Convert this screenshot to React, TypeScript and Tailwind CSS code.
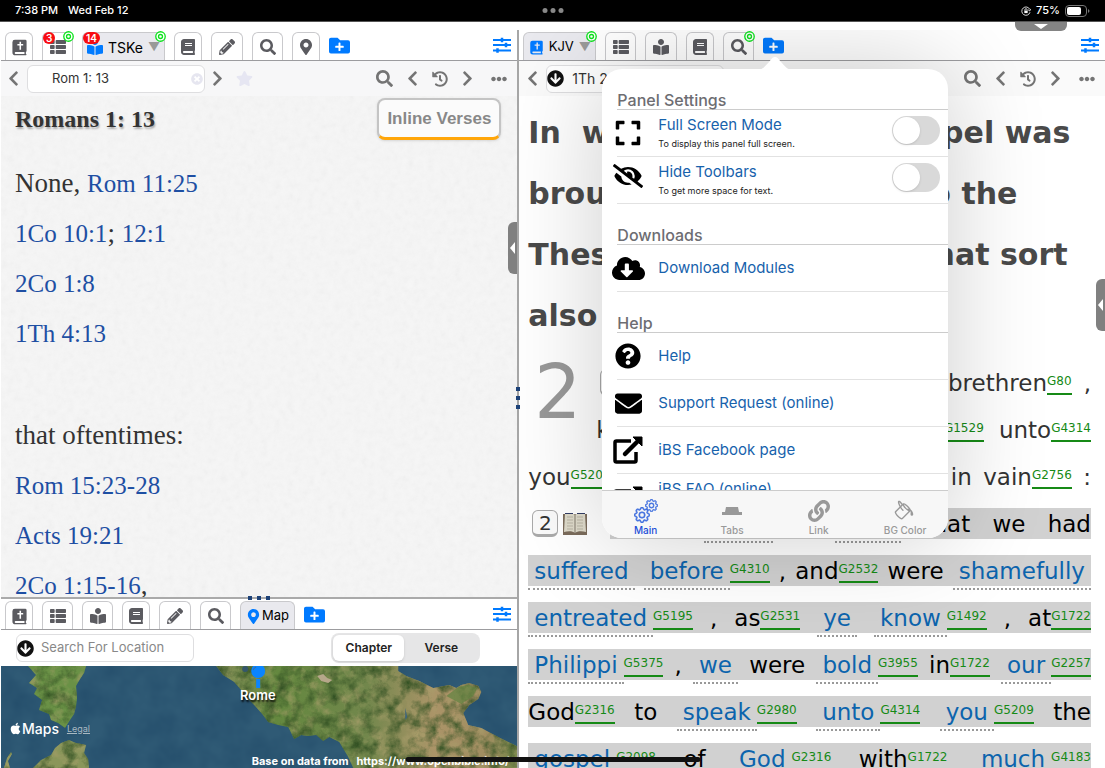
import type { ReactNode } from "react";
import clsx from "clsx";
import {
  FaApple,
  FaArrowCircleDown,
  FaBook,
  FaBookReader,
  FaChevronLeft,
  FaChevronRight,
  FaCloudDownloadAlt,
  FaEllipsisH,
  FaEnvelope,
  FaExpand,
  FaEyeSlash,
  FaFolderPlus,
  FaHistory,
  FaLink,
  FaMapMarkerAlt,
  FaPencilAlt,
  FaQuestionCircle,
  FaSearch,
  FaStar,
  FaThList,
  FaTimesCircle,
} from "react-icons/fa";
import { BsGear, BsPaintBucket } from "react-icons/bs";

type Kind = "plain" | "link" | "strong";
type Piece = [string, Kind?];
type Row = Piece[][];

const verseOneTop: Row[] = [
  [[["For"], ["G1063", "strong"]], [["yourselves"], ["G846", "strong"]], [[","]], [["brethren"], ["G80", "strong"]], [[","]]],
  [
    [["know"], ["G1492", "strong"]],
    [["our"], ["G2257", "strong"]],
    [["entrance"]],
    [["in"], ["G1529", "strong"]],
    [["unto"], ["G4314", "strong"]],
  ],
];

const verseOneEnd: Row = [
  [["you"], ["G5209", "strong"]],
  [[","]],
  [["that"], ["G3754", "strong"]],
  [["it"]],
  [["was"], ["G1096", "strong"]],
  [["not"], ["G3756", "strong"]],
  [["in"]],
  [["vain"], ["G2756", "strong"]],
  [[":"]],
];

const verseTwoStart: Row = [
  [["But"], ["G235", "strong"]],
  [["even", "link"], ["G2532", "strong"]],
  [["after", "link"]],
  [["that"]],
  [["we"]],
  [["had"]],
];

const verseTwo: Row[] = [
  [
    [["suffered", "link"]],
    [["before", "link"], ["G4310", "strong"]],
    [[","]],
    [["and"], ["G2532", "strong"]],
    [["were"]],
    [["shamefully", "link"]],
  ],
  [
    [["entreated", "link"], ["G5195", "strong"]],
    [[","]],
    [["as"], ["G2531", "strong"]],
    [["ye", "link"]],
    [["know", "link"], ["G1492", "strong"]],
    [[","]],
    [["at"], ["G1722", "strong"]],
  ],
  [
    [["Philippi", "link"], ["G5375", "strong"]],
    [[","]],
    [["we", "link"]],
    [["were"]],
    [["bold", "link"], ["G3955", "strong"]],
    [["in"], ["G1722", "strong"]],
    [["our", "link"], ["G2257", "strong"]],
  ],
  [
    [["God"], ["G2316", "strong"]],
    [["to"]],
    [["speak", "link"], ["G2980", "strong"]],
    [["unto", "link"], ["G4314", "strong"]],
    [["you", "link"], ["G5209", "strong"]],
    [["the"]],
  ],
  [
    [["gospel", "link"], ["G2098", "strong"]],
    [["of"]],
    [["God", "link"], ["G2316", "strong"]],
    [["with"], ["G1722", "strong"]],
    [["much", "link"], ["G4183", "strong"]],
  ],
];

function BookCross({ className }: { className?: string }) {
  return (
    <svg viewBox="0 0 24 24" className={className} aria-hidden="true">
      <path
        fill="currentColor"
        fillRule="evenodd"
        d="M5.500 1H20a2 2 0 0 1 2 2v14a1.500 1.500 0 0 1-1 1.400V21a1 1 0 0 1 0 2H6a4 4 0 0 1-4-4V4.500A3.500 3.500 0 0 1 5.500 1zM6.500 18.500a1.250 1.250 0 0 0 0 2.500H19v-2.500zM12 4v3H9v2h3v6h2.200V9h3V7h-3V4z"
      />
    </svg>
  );
}

function Sliders() {
  return (
    <svg viewBox="0 0 18 16" className="h-4 w-[18px] text-[#007aff]" aria-hidden="true">
      <path stroke="currentColor" strokeWidth="2" d="M0 3h18M0 8h18M0 13.500h18" />
      <path stroke="currentColor" strokeWidth="2.500" d="M9 .8v4.400M13 5.800v4.400M4.500 11.300v4.400" />
    </svg>
  );
}

function Target() {
  return (
    <svg viewBox="0 0 10 10" className="absolute -top-[2px] -right-[2px] z-10 size-[11px]" aria-hidden="true">
      <circle cx="5" cy="5" r="4.300" fill="#fff" stroke="#0be31b" strokeWidth="1.200" />
      <circle cx="5" cy="5" r="1.800" fill="none" stroke="#0be31b" strokeWidth="1.200" />
    </svg>
  );
}

function ExternalLink() {
  return (
    <svg viewBox="0 0 30 28" className="h-[28px] w-[30px] shrink-0" aria-hidden="true">
      <path d="M18 5H3.500A1.500 1.500 0 0 0 2 6.500v18A1.500 1.500 0 0 0 3.500 26h18a1.500 1.500 0 0 0 1.500-1.500V16" fill="none" stroke="currentColor" strokeWidth="3.500" />
      <path d="M12 18 25 5" stroke="currentColor" strokeWidth="4.500" strokeLinecap="round" />
      <path d="M20 1h9v9z" fill="currentColor" stroke="currentColor" strokeLinejoin="round" />
    </svg>
  );
}

function OpenBook() {
  return (
    <svg viewBox="0 0 26 24" className="h-6 w-[26px] shrink-0" aria-hidden="true">
      <path d="M1 2h24v21H1z" fill="#7b6c5c" />
      <path d="M3 2c4-1 8-1 10 1 2-2 6-2 10-1l1 18c-4-1-9-1-11 1-2-2-7-2-11-1z" fill="#dedaca" />
      <path d="M13 3v18" stroke="#827a6c" />
      <path d="M5 5h6M5 8h6M5 11h6M5 14h6M5 17h6M15 5h6M15 8h6M15 11h6M15 14h6M15 17h6" stroke="#b9b4a4" />
      <path d="M3 1.500h8M15 1.500h8" stroke="#343e66" />
    </svg>
  );
}

function Tab({
  label,
  width,
  active,
  badge,
  target,
  children,
}: {
  label: string;
  width: string;
  active?: boolean;
  badge?: string;
  target?: boolean;
  children: ReactNode;
}) {
  return (
    <button
      aria-label={label}
      className={clsx(
        "relative flex h-7 shrink-0 items-center justify-center gap-[5px] rounded-t-md border border-b-0 border-[#c9c9cc] pt-px text-[15px]",
        active ? "bg-[#e9e9ee]" : "text-[#5b5b60]",
        width,
      )}
    >
      {badge && (
        <span className="absolute -top-px left-0 z-10 h-[12px] rounded-full bg-[#f80c12] px-[3px] text-[10px] leading-3 font-semibold text-white">
          {badge}
        </span>
      )}
      {target && <Target />}
      {children}
    </button>
  );
}

function TabBar({ children }: { children: ReactNode }) {
  return (
    <div className="flex h-[31px] shrink-0 items-end gap-[9px] border-b border-[#9c9c9f] pr-[6px] pl-1">
      {children}
      <button aria-label="Add tab" className="mb-1 text-[21px] text-[#007aff]">
        <FaFolderPlus />
      </button>
      <button aria-label="Panel options" className="mb-[7px] ml-auto">
        <Sliders />
      </button>
    </div>
  );
}

function HistoryTools() {
  return (
    <div className="ml-auto flex items-center gap-[11px] text-[17px] text-[#747474]">
      <button aria-label="Search"><FaSearch /></button>
      <button aria-label="Back"><FaChevronLeft /></button>
      <button aria-label="History"><FaHistory className="text-[16px]" /></button>
      <button aria-label="Forward"><FaChevronRight /></button>
      <button aria-label="More" className="ml-1"><FaEllipsisH className="text-[16px]" /></button>
    </div>
  );
}

function VerseRow({ row, shaded, lead }: { row: Row; shaded?: boolean; lead?: ReactNode }) {
  return (
    <div className="mb-4 flex h-[31px] gap-4 text-[23px] leading-[33px]">
      {lead}
      <div className={clsx("flex flex-1 justify-between", shaded ? "bg-[#d1d1d1] text-black" : "text-[#333]")}>
        {row.map((group, i) => (
          <span key={i} className="flex items-start">
            {group.map(([text, kind]) =>
              kind === "strong" ? (
                <a key={text} href="#strong" className="h-7 border-b-2 border-[#168a16] text-[12px] leading-[29px] text-[#168a16]">
                  {text}
                </a>
              ) : kind === "link" ? (
                <a key={text} href="#word" className="h-[35px] border-b-2 border-dotted border-[#999] px-[6px] text-[#0c64ad]">
                  {text}
                </a>
              ) : (
                <span key={text}>{text}</span>
              ),
            )}
          </span>
        ))}
      </div>
    </div>
  );
}

function VerseNumber({ value }: { value: string }) {
  return (
    <button className="h-[27px] w-[26px] shrink-0 rounded-md border border-b-[3px] border-[#aaa] bg-[#fafafa] text-[20px] leading-[22px] text-[#333]">
      {value}
    </button>
  );
}

const references = [["1Co 10:1", "12:1"], ["2Co 1:8"], ["1Th 4:13"]];
const laterReferences = ["Rom 15:23-28", "Acts 19:21", "2Co 1:15-16"];

function ReferencePanel() {
  return (
    <section className="flex min-h-0 flex-1 flex-col">
      <TabBar>
        <Tab label="Bible" width="w-7"><BookCross className="size-[17px]" /></Tab>
        <Tab label="Contents" width="w-[31px]" badge="3" target><FaThList className="text-[16px]" /></Tab>
        <Tab label="TSKe" width="w-[83px]" active badge="14" target>
          <FaBookReader className="text-[16px] text-[#007aff]" />
          <span className="text-[14px]">TSKe</span>
          <span className="text-[12px] text-[#999]">▼</span>
        </Tab>
        <Tab label="Dictionary" width="w-7"><FaBook className="text-[16px]" /></Tab>
        <Tab label="Notes" width="w-8"><FaPencilAlt className="text-[16px]" /></Tab>
        <Tab label="Search" width="w-[31px]"><FaSearch className="text-[16px]" /></Tab>
        <Tab label="Map" width="w-7"><FaMapMarkerAlt className="text-[16px]" /></Tab>
      </TabBar>
      <div className="flex h-[35px] shrink-0 items-center bg-[#f7f7f8] pr-[10px] pl-1">
        <button aria-label="Previous" className="w-[22px] text-[17px] text-[#747474]"><FaChevronLeft /></button>
        <div className="flex h-7 w-[178px] items-center rounded-md border border-[#dedee0] bg-white">
          <input aria-label="Verse" defaultValue="Rom 1: 13" className="w-full min-w-0 pl-6 text-[13px] text-[#333] outline-none" />
          <FaTimesCircle className="mr-px shrink-0 text-[12px] text-[#e6e6f0]" />
        </div>
        <button aria-label="Next" className="ml-1 text-[17px] text-[#747474]"><FaChevronRight /></button>
        <button aria-label="Bookmark" className="ml-[10px] text-[17px] text-[#e6e6f2]"><FaStar /></button>
        <HistoryTools />
      </div>
      <div className="relative min-h-0 flex-1 overflow-hidden bg-[#f6f6f6] px-[14px] font-['Liberation_Serif',serif] text-[27px] text-[#333]">
        <svg className="absolute inset-0 h-full w-full opacity-[0.08]" aria-hidden="true">
          <filter id="paper">
            <feTurbulence type="fractalNoise" baseFrequency="0.15" numOctaves="3" />
            <feColorMatrix type="saturate" values="0" />
          </filter>
          <rect width="100%" height="100%" filter="url(#paper)" />
        </svg>
        <div className="relative">
          <div className="flex h-[62px] items-start justify-between">
            <h1 className="pt-[7px] text-[24px] leading-8 font-bold [text-shadow:1px_2px_2px_rgba(0,0,0,0.3)]">Romans 1: 13</h1>
            <button className="mt-[2px] mr-[2px] h-[42px] rounded-lg border-2 border-b-[3px] border-[#c4c4c4] border-b-[#ffa60a] bg-[#fbfbfb] px-2 font-['Liberation_Sans',sans-serif] text-[17px] font-bold text-[#888] shadow">
              Inline Verses
            </button>
          </div>
          <div className="leading-[50px] [&_a]:text-[25px] [&_a]:leading-none [&_a]:text-[#1e4fa3]">
            <p>None, <a href="#rom-11">Rom 11:25</a></p>
            {references.map((line) => (
              <p key={line[0]}>
                {line.map((ref, i) => (
                  <span key={ref}>{i > 0 && "; "}<a href="#ref">{ref}</a></span>
                ))}
              </p>
            ))}
            <p className="mt-[52px]">that oftentimes:</p>
            {laterReferences.map((ref) => (
              <p key={ref}><a href="#ref">{ref}</a>{ref.startsWith("2Co") && ","}</p>
            ))}
          </div>
        </div>
      </div>
    </section>
  );
}

const italy =
  "M215 0l7 9 11 7 7 8 6 8 7 7 8 9 6 8 10 3 10 2 6 12 7-4 7 1 8-1 7 6 6-4 10 5 9 15 5 11h165V81l-20-10-17-9-13-3-5-12 6-8 9-6 3-7-3-6-9-3-8 2-5 3-7-3-16 3-14-7-13-5-8-5V0z";
const corsica =
  "M27 0l8 9-7 8 8 5-3 6 8 6-3 10 10 4 2 6 7 3 7 5 5-8 4-6 2-8 1-8-1-12 4-7 4-6 2-7z";
const sardinia = "M32 102l8-8 10-5 4-7 6-5 8-3 7 3 10 2-2 8 4 6 1 9zM3 102l3-10 4-6 1 2-4 7 2 7z";

function MapView() {
  return (
    <div className="relative h-[102px] shrink-0 overflow-hidden bg-[#2f5a75] text-white">
      <svg viewBox="0 0 516 102" preserveAspectRatio="none" className="block h-full w-full" aria-hidden="true">
        <defs>
          <filter id="terrain" x="0" y="0" width="100%" height="100%" colorInterpolationFilters="sRGB">
            <feTurbulence type="fractalNoise" baseFrequency="0.08" numOctaves="5" seed="8" result="noise" />
            <feColorMatrix in="noise" values="0 0 0 0 0.2  0 0 0 0 0.32  0 0 0 0 0.14  2 0 0 0 -0.800" result="dark" />
            <feComposite in="dark" in2="SourceAlpha" operator="in" result="shade" />
            <feColorMatrix in="noise" values="0 0 0 0 0.66  0 0 0 0 0.62  0 0 0 0 0.42  0 1.800 0 0 -0.800" result="light" />
            <feComposite in="light" in2="SourceAlpha" operator="in" result="dry" />
            <feMerge>
              <feMergeNode in="SourceGraphic" />
              <feMergeNode in="dry" />
              <feMergeNode in="shade" />
            </feMerge>
          </filter>
          <filter id="water" x="0" y="0" width="100%" height="100%" colorInterpolationFilters="sRGB">
            <feTurbulence type="fractalNoise" baseFrequency="0.04" numOctaves="3" seed="3" />
            <feColorMatrix values="0 0 0 0 0.12  0 0 0 0 0.28  0 0 0 0 0.4  1 0 0 0 -0.300" />
          </filter>
          <linearGradient id="soil">
            <stop offset="0" stopColor="#87905a" />
            <stop offset="0.2" stopColor="#64883f" />
            <stop offset="0.5" stopColor="#72874c" />
            <stop offset="0.72" stopColor="#ab9468" />
            <stop offset="0.9" stopColor="#a08d60" />
            <stop offset="1" stopColor="#6f8446" />
          </linearGradient>
        </defs>
        <rect width="516" height="102" filter="url(#water)" />
        <path d={italy} fill="url(#soil)" filter="url(#terrain)" />
        <path d={corsica} fill="#6a9146" filter="url(#terrain)" />
        <path d={sardinia} fill="#8a965a" filter="url(#terrain)" />
        <path d="M316 10l6-2 4 4 5 2-4 3-7-2z" fill="#b6a78a" />
        <path d="M445 30l12-9 10-2 9 3-4 8-12 8z" fill="#55803a" opacity="0.6" />
        <path d="M404 42l2 9-2 3z" fill="#3d647d" />
        <circle cx="244" cy="3" r="3" fill="#34576b" />
        <path d="M255 13h4v9h-4z" fill="#0a84ff" />
        <circle cx="257" cy="5" r="7" fill="#0a84ff" />
        <path d="M252 4a5 5 0 0 1 3-3" fill="none" stroke="#3c6ca0" />
      </svg>
      <span className="absolute top-5 left-[239px] text-[13px] font-semibold [text-shadow:1px_2px_2px_#000]">Rome</span>
      <div className="absolute top-[52px] left-2 flex items-center text-[14px] font-medium">
        <FaApple className="text-[13px]" />
        <span>Maps</span>
        <a href="#legal" className="ml-2 text-[9px] font-normal text-[#a9b9c2] underline">Legal</a>
      </div>
      <p className="absolute right-2 bottom-[-1px] text-[11px] font-bold whitespace-pre">Base on data from   https://www.openbible.info/</p>
    </div>
  );
}

function MapPanel() {
  return (
    <section className="relative shrink-0 border-t-2 border-[#aaa] bg-white">
      <div className="absolute -top-[3px] left-1/2 z-10 flex -translate-x-1/2 gap-[5px]">
        <i className="size-1 bg-[#1d4278]" />
        <i className="size-1 bg-[#1d4278]" />
        <i className="size-1 bg-[#1d4278]" />
      </div>
      <TabBar>
        <Tab label="Bible" width="w-7"><BookCross className="size-[17px]" /></Tab>
        <Tab label="Contents" width="w-[31px]"><FaThList className="text-[16px]" /></Tab>
        <Tab label="Commentary" width="w-[31px]"><FaBookReader className="text-[16px]" /></Tab>
        <Tab label="Dictionary" width="w-7"><FaBook className="text-[16px]" /></Tab>
        <Tab label="Notes" width="w-8"><FaPencilAlt className="text-[16px]" /></Tab>
        <Tab label="Search" width="w-[31px]"><FaSearch className="text-[16px]" /></Tab>
        <Tab label="Map" width="w-[55px]" active>
          <FaMapMarkerAlt className="text-[15px] text-[#007aff]" />
          <span className="-ml-1 text-[13px]">Map</span>
        </Tab>
      </TabBar>
      <div className="flex h-9 items-center justify-between pr-[37px] pl-[15px]">
        <div className="flex h-7 w-[178px] items-center rounded-md border border-[#dedee0]">
          <FaArrowCircleDown className="shrink-0 text-[17px] text-[#111]" />
          <input
            aria-label="Location"
            placeholder="Search For Location"
            className="w-full min-w-0 pl-[7px] text-[13px] outline-none placeholder:text-[#888]"
          />
        </div>
        <div className="flex h-[30px] w-[149px] rounded-lg bg-[#e6e6e7] p-[2px] text-[12px] font-semibold text-[#222]">
          <button className="flex-1 rounded-md bg-white shadow-sm">Chapter</button>
          <button className="w-[74px]">Verse</button>
        </div>
      </div>
      <MapView />
    </section>
  );
}

function SectionTitle({ children }: { children: ReactNode }) {
  return (
    <h2 className="flex h-[41px] items-end border-b border-[#ccc] text-[16px] leading-[18px] font-medium text-[#6d6d72]">
      {children}
    </h2>
  );
}

function ToggleRow({ id, icon, title, note }: { id: string; icon: ReactNode; title: string; note: string }) {
  return (
    <div className="flex h-[47px] items-center border-b border-[#e2e2e2]">
      <span className="mr-[19px] flex w-[22px] justify-center">{icon}</span>
      <label htmlFor={id} className="flex-1 pt-px">
        <span className="block text-[15px] leading-5 text-[#1762ac]">{title}</span>
        <span className="block text-[9px] leading-[18px] text-[#222]">{note}</span>
      </label>
      <input
        id={id}
        type="checkbox"
        className="mt-[6px] mr-2 h-[29px] w-12 appearance-none self-start rounded-full bg-[#d9d9d9] p-px before:block before:size-[27px] before:rounded-full before:bg-white before:shadow checked:bg-green-500 checked:before:ml-5"
      />
    </div>
  );
}

function LinkRow({ icon, title, compact }: { icon: ReactNode; title: string; compact?: boolean }) {
  return (
    <a
      href="#menu"
      className={clsx("flex items-center border-b border-[#e2e2e2] text-[15px] text-[#1762ac]", compact ? "h-8" : "h-[47px]")}
    >
      <span className={clsx("mr-[19px] flex w-[22px] justify-center text-black", compact && "pt-5")}>{icon}</span>
      {title}
    </a>
  );
}

function SettingsPopover() {
  return (
    <div className="absolute top-[39px] left-[83px] z-20 flex h-[469px] w-[346px] flex-col rounded-[20px] bg-white shadow-[0_0_100px_rgba(0,0,0,0.2)]">
      <svg viewBox="0 0 36 13" className="absolute -top-3 left-1/2 h-[13px] w-9 -translate-x-1/2" aria-hidden="true">
        <path d="M0 13c6 0 8-4 12-8 3-4 4-5 6-5s3 1 6 5c4 4 6 8 12 8z" fill="#fff" />
      </svg>
      <div className="min-h-0 flex-1 overflow-hidden pl-[15px]">
        <SectionTitle>Panel Settings</SectionTitle>
        <ToggleRow id="full-screen" icon={<FaExpand className="size-7 shrink-0" />} title="Full Screen Mode" note="To display this panel full screen." />
        <ToggleRow id="hide-toolbars" icon={<FaEyeSlash className="mb-2 size-[30px] shrink-0" />} title="Hide Toolbars" note="To get more space for text." />
        <SectionTitle>Downloads</SectionTitle>
        <LinkRow icon={<FaCloudDownloadAlt className="size-[33px] shrink-0" />} title="Download Modules" />
        <SectionTitle>Help</SectionTitle>
        <LinkRow icon={<FaQuestionCircle className="size-[26px] shrink-0" />} title="Help" />
        <LinkRow icon={<FaEnvelope className="size-[27px] shrink-0" />} title="Support Request (online)" />
        <LinkRow icon={<ExternalLink />} title="iBS Facebook page" />
        <LinkRow compact icon={<ExternalLink />} title="iBS FAQ (online)" />
      </div>
      <nav className="z-10 grid h-12 shrink-0 grid-cols-4 rounded-b-[20px] border-t border-[#ccc] bg-[#f7f7f7] text-[10px] font-medium text-[#999]">
        <button className="flex flex-col items-center justify-end text-[#1d4fd8]">
          <span className="relative block h-6 w-6 text-[#4371df]">
            <BsGear className="absolute bottom-0 left-0 size-4" strokeWidth="0.6" />
            <BsGear className="absolute top-0 right-0 size-[13px]" strokeWidth="0.6" />
          </span>
          Main
        </button>
        <button className="flex flex-col items-center justify-end">
          <svg viewBox="0 0 20 24" className="h-6 w-5" aria-hidden="true">
            <path d="M4 8h12l1 5h3v3H0v-3h3z" fill="#999" />
          </svg>
          Tabs
        </button>
        <button className="flex flex-col items-center justify-end">
          <FaLink className="size-6 p-px" />
          Link
        </button>
        <button className="flex flex-col items-center justify-end">
          <BsPaintBucket className="size-6 p-px" />
          BG Color
        </button>
      </nav>
    </div>
  );
}

function BiblePanel() {
  return (
    <section className="relative flex min-w-0 flex-1 flex-col overflow-hidden bg-white">
      <TabBar>
        <Tab label="KJV" width="w-[73px]" active target>
          <BookCross className="size-[15px] text-[#007aff]" />
          <span className="text-[13px]">KJV</span>
          <span className="text-[12px] text-[#999]">▼</span>
        </Tab>
        <Tab label="Contents" width="w-[31px]"><FaThList className="text-[16px]" /></Tab>
        <Tab label="Commentary" width="w-8"><FaBookReader className="text-[16px]" /></Tab>
        <Tab label="Dictionary" width="w-7"><FaBook className="text-[16px]" /></Tab>
        <Tab label="Search" width="w-[31px]" target><FaSearch className="text-[16px]" /></Tab>
      </TabBar>
      <div className="flex h-[35px] shrink-0 items-center bg-[#fafafa] pr-[10px] pl-[5px]">
        <button aria-label="Previous" className="w-[22px] text-[17px] text-[#747474]"><FaChevronLeft /></button>
        <div className="flex h-7 w-[178px] items-center rounded-md border border-[#dedee0] bg-white">
          <FaArrowCircleDown className="shrink-0 text-[17px] text-[#111]" />
          <input aria-label="Passage" defaultValue="1Th 2: 2" className="w-full min-w-0 pl-2 text-[14px] text-[#333] outline-none" />
        </div>
        <HistoryTools />
      </div>
      <article className="min-h-0 flex-1 overflow-hidden pt-[6px] pr-[14px] pl-[9px] font-['DejaVu_Sans',sans-serif]">
        <h1 className="mb-[21px] text-[30px] leading-[61px] font-bold text-[#4a4a4a]">
          In &nbsp;what manner the gospel was
          <br />
          brought and preached to the
          <br />
          Thessalonians, and in what sort
          <br />
          also they received it.
        </h1>
        <div className="flex">
          <span className="w-[68px] shrink-0 pt-1 pl-[6px] text-[74px] leading-[42px] text-[#999]">2</span>
          <div className="flex-1">
            <VerseRow
              row={verseOneTop[0]}
              lead={
                <span className="flex items-center gap-1 pl-1">
                  <VerseNumber value="1" />
                  <OpenBook />
                </span>
              }
            />
            <VerseRow row={verseOneTop[1]} />
          </div>
        </div>
        <VerseRow row={verseOneEnd} />
        <VerseRow
          shaded
          row={verseTwoStart}
          lead={
            <span className="flex w-[66px] items-center gap-1 pl-1">
              <VerseNumber value="2" />
              <OpenBook />
            </span>
          }
        />
        {verseTwo.map((row, i) => (
          <VerseRow key={i} shaded row={row} />
        ))}
      </article>
      <SettingsPopover />
    </section>
  );
}

function StatusBar() {
  return (
    <header className="relative z-30 flex h-[22px] shrink-0 items-center justify-between border-b border-[#555] bg-black px-[15px] text-[11px] font-medium text-white">
      <div className="flex gap-[10px]">
        <span>7:38 PM</span>
        <span>Wed Feb 12</span>
      </div>
      <div className="absolute left-1/2 flex -translate-x-1/2 gap-[3px]">
        <i className="size-[5px] rounded-full bg-[#888]" />
        <i className="size-[5px] rounded-full bg-[#888]" />
        <i className="size-[5px] rounded-full bg-[#888]" />
      </div>
      <div className="flex items-center gap-[5px]">
        <svg viewBox="0 0 12 12" className="size-[10px]" fill="none" stroke="#fff" aria-hidden="true">
          <path d="M10.500 4a5 5 0 1 0 .3 3.500M11.500 3.500l-1 2.500-2-1.500" />
          <path d="M4 5.500h4v3H4z" fill="#fff" stroke="none" />
          <path d="M4.700 5.500V4.500a1.300 1.300 0 0 1 2.600 0v1" />
        </svg>
        <span>75%</span>
        <svg viewBox="0 0 25 12" className="h-3 w-[25px]" aria-hidden="true">
          <rect x=".5" y=".5" width="21" height="11" rx="3.500" fill="none" stroke="#777" />
          <rect x="2" y="2" width="14" height="8" rx="2" fill="#fff" />
          <path d="M23 4c2 1 2 3 0 4z" fill="#777" />
        </svg>
      </div>
      <button aria-label="Open menu" className="absolute top-[22px] right-[38px] flex h-[9px] w-[52px] items-center justify-center rounded-b-md bg-[#848484]">
        <svg viewBox="0 0 14 5" className="h-[5px] w-[14px]" aria-hidden="true"><path d="M0 0h14L7 5z" fill="#fff" /></svg>
      </button>
    </header>
  );
}

function SideHandle({ className }: { className: string }) {
  return (
    <button aria-label="Slide panel" className={clsx("absolute z-10 flex h-[52px] w-[9px] items-center justify-center rounded-l-md bg-[#808080]", className)}>
      <svg viewBox="0 0 5 12" className="h-3 w-[5px]" aria-hidden="true"><path d="M5 0v12L0 6z" fill="#fff" /></svg>
    </button>
  );
}

export default function App() {
  return (
    <div className="relative flex h-screen flex-col overflow-hidden bg-white font-['Inter',sans-serif] text-black">
      <StatusBar />
      <main className="flex min-h-0 flex-1 pt-2">
        <div className="relative flex w-[47%] shrink-0 flex-col border-r-2 border-[#a6a6a6] pl-px">
          <ReferencePanel />
          <MapPanel />
          <SideHandle className="top-48 right-0" />
          <div className="absolute top-[357px] -right-[3px] z-10 flex flex-col gap-[5px]">
            <i className="size-1 bg-[#1d4278]" />
            <i className="size-1 bg-[#1d4278]" />
            <i className="size-1 bg-[#1d4278]" />
          </div>
        </div>
        <BiblePanel />
      </main>
      <SideHandle className="top-[279px] right-0" />
      <div className="absolute bottom-[6px] left-1/2 z-30 h-[5px] w-[295px] -translate-x-1/2 rounded-full bg-[#111]" />
    </div>
  );
}
